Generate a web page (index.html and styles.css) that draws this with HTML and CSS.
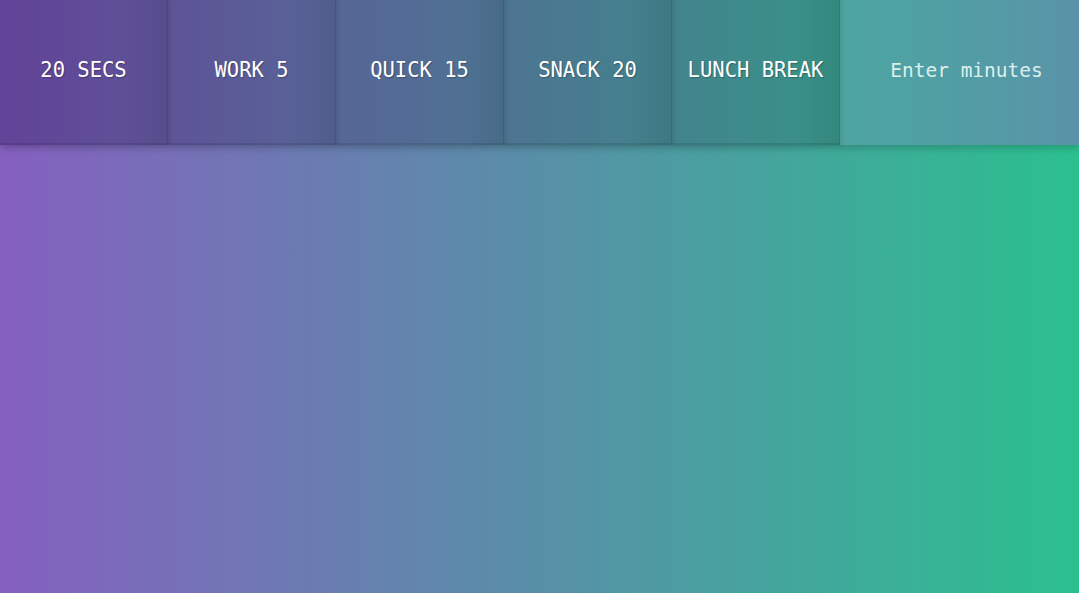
FILE: index.html
```html
<!DOCTYPE html>
<html lang="en">
<head>
<meta charset="utf-8">
<title>Countdown Timer</title>
<link rel="stylesheet" href="styles.css">
</head>
<body>
<div class="timer">
  <div class="timer__controls">
    <div class="timer__buttons">
      <button class="timer__button">20 Secs</button>
      <button class="timer__button">Work 5</button>
      <button class="timer__button">Quick 15</button>
      <button class="timer__button">Snack 20</button>
      <button class="timer__button">Lunch Break</button>
    </div>
    <form class="timer__form">
      <input class="timer__input" type="text" name="minutes" placeholder="Enter minutes">
    </form>
  </div>
  <div class="display"></div>
</div>
</body>
</html>
```

FILE: styles.css
```css
html {
  box-sizing: border-box;
  height: 100%;
  background: linear-gradient(to right, #8560c0 0%, #2bc08f 100%);
}
*, *::before, *::after {
  box-sizing: inherit;
}
body {
  margin: 0;
  height: 100%;
  font-family: "DejaVu Sans Mono", "Liberation Mono", monospace;
}
.timer {
  display: flex;
  flex-direction: column;
  min-height: 100%;
}
.timer__controls {
  display: flex;
  height: 145px;
  box-shadow: 0 3px 8px rgba(0, 0, 0, 0.2);
  position: relative;
  z-index: 1;
}
.timer__buttons {
  display: flex;
  flex: 0 0 840px;
  background: linear-gradient(to right, rgba(17, 0, 59, 0.3) 0%, rgba(15, 5, 45, 0.2) 40%, rgba(10, 5, 25, 0.14) 100%);
}
.timer__button {
  flex: 0 0 168px;
  border: 0;
  border-right: 1px solid rgba(0, 0, 0, 0.16);
  border-bottom: 2px solid rgba(0, 0, 0, 0.1);
  background: linear-gradient(to right, rgba(0, 0, 0, 0) 0%, rgba(0, 0, 0, 0) 75%, rgba(0, 0, 0, 0.08) 100%);
  box-shadow: 2px 0 4px rgba(0, 0, 0, 0.1);
  color: #ffffff;
  font-family: "DejaVu Sans Mono", "Liberation Mono", monospace;
  font-size: 20.5px;
  text-transform: uppercase;
  text-shadow: 1px 1px 1px rgba(0, 0, 0, 0.25);
  padding: 0 0 4px;
  cursor: pointer;
}
.timer__form {
  flex: 1;
  display: flex;
}
.timer__input {
  flex: 1;
  min-width: 0;
  border: 0;
  padding: 0 12px 5px 0;
  background: linear-gradient(to right, rgba(132, 96, 192, 0.12) 0%, rgba(132, 96, 192, 0.52) 100%), rgba(255, 255, 255, 0.04);
  color: #e6f4f0;
  font-family: "DejaVu Sans Mono", "Liberation Mono", monospace;
  font-size: 19.5px;
  text-align: center;
  outline: none;
}
.timer__input::placeholder {
  color: #dcefec;
  opacity: 1;
}
.display {
  flex: 1;
}
```
